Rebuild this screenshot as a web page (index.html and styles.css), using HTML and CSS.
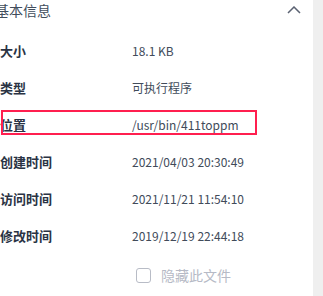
FILE: index.html
```html
<!DOCTYPE html>
<html lang="zh-CN">
<head>
    <meta charset="UTF-8">
    <meta name="viewport" content="width=device-width, initial-scale=1.0">
    <title>基本信息</title>
    <link rel="stylesheet" href="styles.css">
</head>
<body>
    <div class="panel">
        <div class="info">
            <div class="head">
                <h2>基本信息</h2>
                <svg class="chevron" width="14" height="8" viewBox="0 0 14 8">
                    <polyline points="1,7 7,1 13,7" fill="none" stroke="#5b6272" stroke-width="1.5"/>
                </svg>
            </div>

            <div class="rows">
                <div class="row">
                    <span class="label">大小</span>
                    <span class="value">18.1 KB</span>
                </div>
                <div class="row">
                    <span class="label">类型</span>
                    <span class="value">可执行程序</span>
                </div>
                <div class="row marked">
                    <span class="label">位置</span>
                    <span class="value">/usr/bin/411toppm</span>
                </div>
                <div class="row">
                    <span class="label">创建时间</span>
                    <span class="value">2021/04/03 20:30:49</span>
                </div>
                <div class="row">
                    <span class="label">访问时间</span>
                    <span class="value">2021/11/21 11:54:10</span>
                </div>
                <div class="row">
                    <span class="label">修改时间</span>
                    <span class="value">2019/12/19 22:44:18</span>
                </div>
            </div>

            <label class="hide">
                <span class="box"></span>
                <span>隐藏此文件</span>
            </label>
        </div>
        <div class="rail"></div>
    </div>
</body>
</html>
```

FILE: styles.css
```css
body {
    margin: 0;
    width: 323px;
    height: 296px;
    overflow: hidden;
    background: #fff;
    font-family: "Noto Sans CJK SC", "Noto Sans", sans-serif;
}
.panel {
    display: flex;
    height: 296px;
}
.info {
    width: 313px;
}
.rail {
    flex: 1;
    background: #efefef;
}
.head {
    display: flex;
    justify-content: space-between;
    align-items: center;
    height: 21px;
    padding-right: 12px;
}
.head h2 {
    margin: 0 0 0 -5px;
    font-size: 14px;
    font-weight: normal;
    line-height: 21px;
    color: #414d5c;
}
.chevron {
    display: block;
    margin-top: -1px;
}
.rows {
    margin-top: 11px;
}
.row {
    position: relative;
    display: flex;
    align-items: center;
    height: 37px;
}
.label {
    width: 132px;
    font-size: 13px;
    font-weight: bold;
    color: #2a3344;
}
.value {
    font-size: 12px;
    color: #414b5a;
}
.marked::after {
    content: "";
    position: absolute;
    left: 1px;
    top: 4px;
    width: 252px;
    height: 21px;
    border: 2px solid #ff1f4f;
}
.hide {
    display: flex;
    align-items: center;
    gap: 10px;
    margin-top: 11px;
    padding-left: 136px;
    font-size: 14px;
    color: #b6bac6;
}
.box {
    width: 13px;
    height: 13px;
    border: 1.5px solid #b8bcc6;
    border-radius: 3px;
}
```
